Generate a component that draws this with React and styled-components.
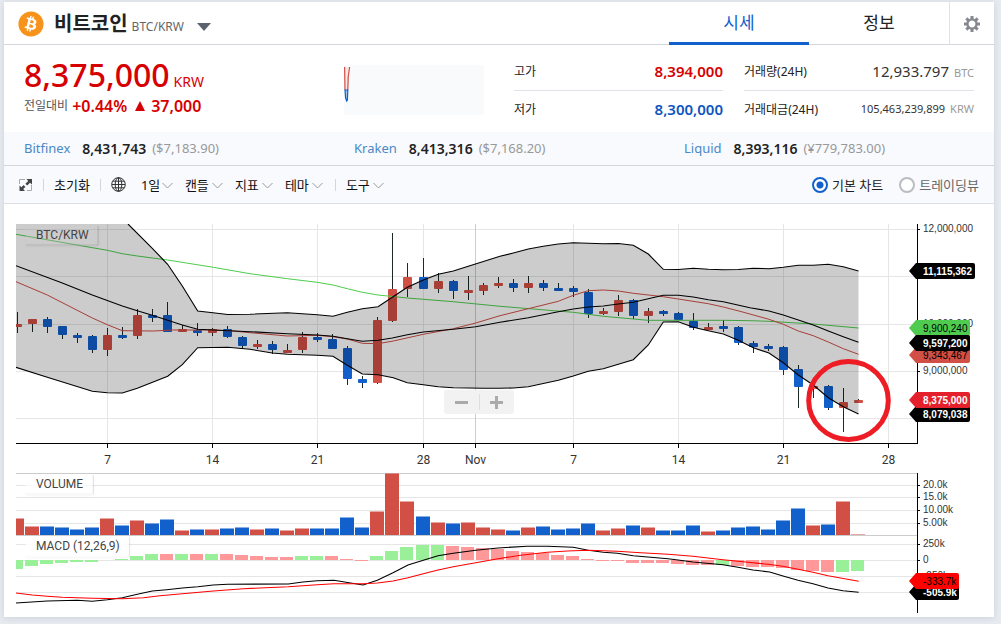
import React from "react";
import styled, { createGlobalStyle } from "styled-components";
import { FaBitcoin } from "react-icons/fa";

const BLUE = "#1260cc";
const RED = "#d14f45";
const GREEN = "#4fcc4f";

const GlobalStyle = createGlobalStyle`
  *, *::before, *::after { box-sizing: border-box; }
  body {
    margin: 0;
    background: #e7ebf0;
    color: #222;
    font-family: "Noto Sans", "Noto Sans CJK KR", sans-serif;
    font-size: 13px;
  }
  button, input, select { font: inherit; color: inherit; }
  button { border: 0; padding: 0; background: none; cursor: pointer; }
`;

/* ---------- layout ---------- */

const Card = styled.main`
  margin: 2px 7px 7px 4px;
  background: #fff;
  box-shadow: 0 1px 6px rgba(60, 80, 110, 0.16);
`;

const Header = styled.header`
  display: flex;
  align-items: stretch;
  height: 43px;
  box-shadow: inset 0 -1px #d4d6dc;
`;

const Market = styled.div`
  display: flex;
  align-items: center;
  flex: 1;
  padding-left: 14px;
`;

const CoinLogo = styled(FaBitcoin)`
  width: 26px;
  height: 26px;
  color: #f7931a;
`;

const CoinName = styled.h1`
  margin: 0 4px 0 10px;
  font-size: 20px;
  line-height: 26px;
  font-weight: 700;
`;

const Pair = styled.span`
  padding-top: 6px;
  font-size: 12px;
  line-height: 16px;
  color: #666;
`;

const CaretButton = styled.button`
  display: flex;
  margin-left: 13px;
  padding-top: 6px;
  color: #5b6270;
`;

const Tab = styled.button`
  width: 140px;
  padding-top: 2px;
  font-size: 17px;
  line-height: 24px;
  color: ${(p) => (p.$active ? BLUE : "#222")};
  border-bottom: 3px solid ${(p) => (p.$active ? BLUE : "transparent")};
`;

const Settings = styled.button`
  display: flex;
  align-items: center;
  justify-content: center;
  width: 45px;
  color: #85888f;
  border-left: 1px solid #e0e2e8;
`;

const Summary = styled.section`
  display: flex;
  height: 87px;
  padding: 0 20px;
`;

const PriceBlock = styled.div`
  flex: 1;
  padding-top: 12px;
  color: #d60000;
`;

const PriceLine = styled.div`
  display: flex;
  align-items: baseline;
  gap: 4px;
  height: 36px;
  font-size: 14px;
  line-height: 36px;
`;

const Price = styled.strong`
  font-size: 32px;
  font-weight: 500;
`;

const ChangeLine = styled.div`
  display: flex;
  align-items: center;
  gap: 4px;
  font-size: 16px;
  font-weight: 600;
  line-height: 26px;
`;

const ChangeLabel = styled.span`
  font-size: 12px;
  font-weight: 400;
  color: #555;
`;

const SparkBox = styled.div`
  width: 140px;
  height: 50px;
  margin: 20px 30px 0 0;
  background: #f8fafc;
`;

const Stats = styled.dl`
  width: ${(p) => p.$width}px;
  margin: 8px 0 0;
  & + & { margin-left: 21px; }
`;

const StatRow = styled.div`
  display: flex;
  align-items: center;
  justify-content: space-between;
  height: 37px;
  padding-bottom: 1px;
  & + & { border-top: 1px solid #e0e2e9; }
`;

const StatLabel = styled.dt`
  font-size: 12px;
`;

const StatValue = styled.dd`
  display: flex;
  align-items: baseline;
  gap: 5px;
  margin: 0;
  font-size: ${(p) => (p.$small ? 11 : 15)}px;
  font-weight: ${(p) => (p.$color ? 600 : 400)};
  color: ${(p) => p.$color || "#333"};
`;

const Unit = styled.span`
  font-size: 11px;
  color: #999;
`;

const Quotes = styled.section`
  display: grid;
  grid-template-columns: repeat(3, 1fr);
  height: 34px;
  padding-bottom: 1px;
  background: #f8fafd;
  border-bottom: 1px solid #d4d6dc;
`;

const Quote = styled.div`
  display: flex;
  align-items: center;
  padding-left: 20px;
`;

const Exchange = styled.span`
  margin-right: 12px;
  color: #4a88c8;
`;

const QuotePrice = styled.strong`
  margin-right: 6px;
  font-size: 14px;
  font-weight: 600;
`;

const QuoteForeign = styled.span`
  color: #999;
`;

const Toolbar = styled.div`
  display: flex;
  align-items: center;
  height: 38px;
  padding: 0 15px;
  background: #f8fafd;
  border-bottom: 1px solid #dcdfe4;
  color: #111;
`;

const ToolButton = styled.button`
  display: flex;
  line-height: 20px;
`;

const Divider = styled.i`
  width: 1px;
  height: 12px;
  margin: 0 10px;
  background: #d4d6da;
`;

const Menus = styled.div`
  display: flex;
  gap: 12px;
  margin: 0 2px 0 15px;
`;

const Dropdown = styled.label`
  display: flex;
  align-items: center;
  gap: 3px;
`;

const DropdownSelect = styled.select`
  width: ${(p) => p.$width}px;
  height: 20px;
  padding: 0;
  border: 0;
  appearance: none;
  background: none;
  line-height: 20px;
`;

const ChartKinds = styled.div`
  display: flex;
  gap: 16px;
  margin-left: auto;
`;

const RadioLabel = styled.label`
  display: flex;
  align-items: center;
  gap: 4px;
  color: ${(p) => (p.$muted ? "#666" : "#222")};
`;

const Radio = styled.input`
  width: 16px;
  height: 16px;
  margin: 0;
  border: 2px solid #b9bcc0;
  border-radius: 50%;
  appearance: none;
  background: #fff;
  &:checked {
    border-color: ${BLUE};
    background: radial-gradient(circle, ${BLUE} 0 3px, #fff 4px);
  }
`;

const ChartArea = styled.section`
  position: relative;
`;

const ChartSvg = styled.svg`
  display: block;
  width: 100%;
  height: auto;
  font-family: Roboto, "Liberation Sans", sans-serif;
`;

const ZoomControl = styled.div`
  position: absolute;
  left: 440px;
  top: 186px;
  display: flex;
  align-items: center;
  width: 70px;
  height: 24px;
  border-radius: 3px;
  background: rgba(241, 241, 241, 0.96);
  color: #aaa;
`;

const ZoomButton = styled.button`
  display: flex;
  align-items: center;
  justify-content: center;
  flex: 1;
  height: 16px;
  & + & { border-left: 1px solid #ddd; }
`;

/* ---------- icons ---------- */

const Gear = () => (
  <svg width="16" height="16" viewBox="-8 -8 16 16" fill="none" stroke="currentColor">
    <circle r="4.6" strokeWidth="2.4" />
    {[0, 45, 90, 135, 180, 225, 270, 315].map((a) => (
      <path key={a} d="M0-5V-8" strokeWidth="3" transform={`rotate(${a})`} />
    ))}
  </svg>
);

const Expand = () => (
  <svg width="14" height="14" viewBox="0 0 14 14" fill="none">
    <path d="M0.5 6V1.5H6M12.5 7V12.5H8" stroke="#aaa" />
    <path d="M7.5 1H13V6.5L11 4.8L8.2 7.6L6.4 5.8L9.2 3ZM6 13H0.5V7.5L2.5 9.2L4.6 7.1L6.4 8.9L4.2 11Z" fill="#444" />
  </svg>
);

const Globe = () => (
  <svg width="15" height="15" viewBox="0 0 15 15" fill="none" stroke="#333">
    <circle cx="7.5" cy="7.5" r="6.8" />
    <ellipse cx="7.5" cy="7.5" rx="3.3" ry="6.8" />
    <path d="M7.5 1V14M1 7.5H14M2 4.2H13M2 10.8H13" />
  </svg>
);

const Chevron = () => (
  <svg width="11" height="8" viewBox="0 0 11 8" fill="none" stroke="#999">
    <path d="M0.5 2L5.5 7L10.5 2" />
  </svg>
);

/* ---------- chart data ---------- */

// direction, wick top, body top, body bottom, wick bottom
const candles = `r 312 324 327 333|r 319 319 324 332|b 317 319 327 333|b 326 326 335 339|b 333 335 338 343|b 335 336 350 353|r 328 335 350 356|b 327 335 338 339|r 309 315 336 339|b 309 315 318 322|b 302 315 332 332|r 325 329 332 332|b 323 330 333 336|r 328 329 333 336|b 326 329 337 338|b 336 337 346 349|r 340 344 347 349|b 341 344 350 354|r 344 350 353 353|r 332 337 350 353|b 333 337 340 342|b 334 339 349 349|b 346 348 379 385|b 376 379 383 388|r 317 320 383 384|r 233 289 321 322|r 263 277 289 297|b 258 277 289 289|r 273 281 289 293|b 280 281 291 299|r 276 290 293 300|r 283 285 291 295|r 277 283 286 288|b 279 283 288 292|r 276 283 288 293|b 280 283 288 291|b 283 288 291 291|b 286 288 292 297|b 289 292 314 318|r 308 311 314 315|r 295 300 312 316|b 299 300 316 319|r 308 311 316 323|b 310 311 314 316|b 312 313 320 320|b 313 321 328 330|r 323 327 330 330|b 320 326 329 332|b 326 327 343 345|b 341 343 347 353|b 344 346 349 351|b 346 347 370 375|b 365 369 387 408|r 385 386 389 398|b 385 386 408 410|r 388 402 408 432|r 399 400 403 403`
  .split("|")
  .map((row) => {
    const [dir, ...n] = row.split(" ");
    return [dir, ...n.map(Number)];
  });

const volumes = "r518 r526 b526 b527 b529 b527 r518 b525 r520 b523 b519 r530 b529 r529 b528 b527 r529 b528 r530 r528 b528 b528 b517 b527 r511 r473 r501 b516 r522 b523 r522 r527 r529 b530 r527 b526 b529 b528 b523 r530 r528 b525 r527 b530 b530 b525 r531 b530 b527 b526 b529 b520 b508 r525 b524 r501 r534"
  .split(" ");

const histogram = "g569 g566 g564 g563 g562 g562 g560 g559 g556 g554 p554 g554 p554 g554 p554 p555 p556 p557 p557 g556 g556 p556 p559 p561 g556 g551 g547 g545 g545 p546 p547 p548 p549 p551 p552 p553 p555 p556 p559 p561 p561 p563 p563 p563 p564 p565 p565 g565 p566 p567 p567 p568 p570 p571 p572 g572 g571"
  .split(" ");

const upper = "128,224 152.3,248.3 167.6,264.3 182.3,286 197.7,311 213,312.7 227.7,314.5 250,314.2 287.3,312.7 317.3,314.7 333,316.3 347.3,312.3 362.3,308.7 378,306.7 392.3,297.3 407.3,287.3 423.3,280 438.3,274.3 453.3,271 468.3,266.3 500,256.3 513.3,253 528.3,249 543.3,246.3 558.3,244 573.3,242.7 588.3,243.3 603.3,243.8 618.3,243.5 633.3,245.3 648.3,254 663.3,269.3 678.3,269.5 693.3,268.2 708.3,269.3 723.3,269.8 738.3,269.5 753.3,268.3 769,268.7 783.3,267.3 798.3,265.3 813.3,265.3 828.3,264.3 843.3,266.7 858.5,271";
const lower = "16,367.3 47.3,377.3 92.3,391.3 107.3,392.7 122.3,393 137.3,388.3 167.7,376.3 182.3,364.7 197.7,347.7 227.7,347.3 250,349.3 272.3,353 287.3,354.3 317.3,355.3 333,356.3 347.3,365.3 362.3,374 378,374.7 393.3,377.7 407.3,382.7 423.3,384.7 438.3,386.7 453.3,387.7 483.3,388.3 500,388.3 513.3,388 528.3,386.7 558.3,380.3 573.3,376 588.3,371.3 603.3,368.7 618.3,364.3 633.3,359.7 648.3,345 663.3,322 678.3,321.7 693.3,327.3 708.3,330.7 723.3,334 738.3,340.3 753.3,347.7 769,353 783.3,362.7 798.3,375 813.3,385 828.3,397.7 843.3,406.7 858.5,414";
const middle = "16,265.7 62.3,283 92.3,295 122.3,306 137.3,310.7 152.3,315.3 167.7,320.3 182.3,325 197.7,329.3 250,331.7 287.3,333.7 317.3,335 333,336.3 347.3,338.7 362.3,341.3 378,340.3 392.3,338 407.3,334.7 423.3,332 453.3,329.3 475.7,326.7 500,322.3 528.3,317.7 558.3,311.7 573.3,309 588.3,307 603.3,306 618.3,304 633.3,302.3 648.3,298.7 663.3,295.3 678.3,295.3 693.3,297 708.3,299.7 723.3,301.7 750,307.7 769,311 783.3,315 798.3,320 813.3,325 828.3,331 843.3,336.7 858.5,342.3";
const shortAverage = "16,281.7 47.3,295 92.3,318 107.3,324.7 122.3,330.7 153.3,331 173.3,330 213.3,330 233,331 250,332.7 287.3,336 317.3,335.3 333,336.7 347.3,339 362.3,343.3 378,343.7 393.3,341 423.3,334.3 453.3,328.7 475.7,323 500,315.7 528.3,308.7 558.3,301.3 573.3,295.3 588.3,290.7 603.3,290 618.3,291 633.3,293.3 663.3,296.7 678.3,299 708.3,303.7 723.3,307 740,311.3 769,319.3 783.3,324.3 798.3,331 813.3,335.7 828.3,342 843.3,348.7 858.5,354.3";
const longAverage = "16,234.3 92.3,247.7 107.3,250.3 122.3,253.7 137.3,256 167.7,260 213.3,267.3 250,273.7 287.3,278.7 317.3,282.3 333,285 347.3,288.7 362.3,292.3 378,295 407.3,298 423.3,299.3 453.3,301.7 500,306.3 573.3,312.3 603.3,316.3 633.3,319 648.3,320.3 723.3,320.3 750,320.7 769,321.3 813.3,324 858.5,328";
const macd = "16,603 47.3,601 77.3,600.3 92.3,601.3 107.3,599.7 122.3,597.7 137.3,594.3 152.3,591 166.7,589.7 182.3,588 197.7,586.7 213.3,585 227.7,584.3 288.3,584 302.7,582 317.3,580.7 334,580.3 349,582.7 363,585 377.3,580.3 393,572.7 408,565 423.3,560.3 438,555.7 453.3,553.3 475.7,550.3 498,548 527.3,546.3 547.3,546.3 573.3,547.3 588.3,550.3 603.3,552.3 617.3,553.3 633.3,555.7 668,558.7 678,560 693,562 723,564.7 738,567.3 753,570 769.7,572 783,576 798,580.3 813,583.7 828,588 843,590.7 858.7,592.3";
const signal = "16,593 32.3,595 47.3,596.3 62.3,597.3 92.3,598.3 122.3,598.7 143.3,597.7 160,595.7 182.3,593.7 213.3,591 243.3,588.7 288.3,586.7 317.3,584.7 334,583.7 363,583.7 377.3,583 393,581 408,577.7 423.3,573.7 438,570 453.3,566.7 475.7,562.7 498,558.7 520.7,555.3 547.3,552.3 567.3,551 588.3,550.3 617.3,551.3 640.7,552.7 668,554.3 693,556.3 723,559.7 738,561.3 768,564.3 783,566.3 798,569.3 813,572.3 828,575.7 858.7,581.3";

const dates = [[107, "7"], [212, "14"], [317, "21"], [423, "28"], [475, "Nov"], [573, "7"], [678, "14"], [783, "21"], [888, "28"]];

// Levels fully covered by a tag carry no label.
const scales = [
  [229, "12,000,000"], [276], [324, "10,000,000"], [371, "9,000,000"], [418],
  [485, "20.0k"], [497, "15.0k"], [510, "10.00k"], [523, "5.00k"],
  [544, "250k"], [560, "0"], [576, "-250k"], [592],
];

const tags = [
  { y: 271, text: "11,115,362", fill: "#000", ink: "#fff", right: 975 },
  { y: 328, text: "9,900,240", fill: GREEN, ink: "#000", right: 970 },
  { y: 355, text: "9,343,467", fill: RED, ink: "#000", right: 970 },
  { y: 343, text: "9,597,200", fill: "#000", ink: "#fff", right: 970 },
  { y: 414, text: "8,079,038", fill: "#000", ink: "#fff", right: 970 },
  { y: 400, text: "8,375,000", fill: "#e4202c", ink: "#fff", right: 970 },
  { y: 592, text: "-505.9k", fill: "#000", ink: "#fff", right: 959 },
  { y: 581, text: "-333.7k", fill: "#f00", ink: "#000", right: 959 },
];

const panelLabels = [
  { y: 224, width: 72, text: "BTC/KRW", fill: "rgba(204,204,204,0.3)" },
  { y: 473, width: 67, text: "VOLUME", fill: "rgba(255,255,255,0.7)" },
  { y: 535, width: 103, text: "MACD (12,26,9)", fill: "rgba(255,255,255,0.9)" },
];

// The window skips one pixel after the 27th day.
const dayX = (i) => 17 + 15 * i + (i > 26 ? 1 : 0);
const tone = { r: RED, b: BLUE, g: "#99f099", p: "#ff9999" };

function Chart() {
  return (
    <ChartSvg viewBox="4 204 990 413" role="img" aria-label="BTC/KRW">
      <defs>
        <clipPath id="plot">
          <rect x="16" y="224" width="901" height="390" />
        </clipPath>
        <filter id="lift" x="-10%" y="-20%" width="120%" height="150%">
          <feDropShadow dx="0" dy="1" stdDeviation="1" floodOpacity="0.5" />
        </filter>
      </defs>

      <g fill="#e6e6e6" shapeRendering="crispEdges">
        {scales.map(([y]) => <rect key={y} x="16" y={y} width="901" height="1" />)}
        {dates.map(([x, t]) => (
          <rect key={x} x={x} y="224" width="1" height="219" fill={t === "Nov" ? "#ccc" : undefined} />
        ))}
        <rect x="16" y="473" width="901" height="1" fill="#ccc" />
        <rect x="16" y="535" width="901" height="1" fill="#ccc" />
      </g>

      <g clipPath="url(#plot)">
        <g shapeRendering="crispEdges">
          {candles.map(([dir, wt, , , wb], i) => (
            <rect key={i} x={dayX(i)} y={wt} width="1" height={wb - wt} fill="#1b2a24" />
          ))}
        </g>
        {candles.map(([dir, , bt, bb], i) => (
          <rect key={i} x={dayX(i) - 4} y={bt} width="9" height={bb - bt} rx="1" fill={tone[dir]} />
        ))}
        <g fill="none" strokeWidth="1">
          <polyline points={longAverage} stroke={GREEN} />
          <polyline points={shortAverage} stroke={RED} />
        </g>
        <polygon
          points={`16,224 ${upper} ${lower.split(" ").reverse().join(" ")}`}
          fill="#000"
          fillOpacity="0.2"
        />
        <g fill="none" stroke="#000" strokeWidth="1.1">
          <polyline points={upper} />
          <polyline points={lower} />
          <polyline points={middle} />
        </g>

        <g shapeRendering="crispEdges">
          {volumes.map((v, i) => {
            const y = Number(v.slice(1));
            return (
              <g key={i} fill={tone[v[0]]}>
                <rect x={dayX(i) - 7} y={y} width="14" height="1" opacity="0.5" />
                <rect x={dayX(i) - 7} y={y + 1} width="14" height={534 - y} />
              </g>
            );
          })}
          {histogram.map((v, i) => {
            const y = Number(v.slice(1));
            return (
              <rect
                key={i}
                x={dayX(i) - 7}
                y={Math.min(y, 560)}
                width="13"
                height={Math.abs(y - 560)}
                fill={tone[v[0]]}
              />
            );
          })}
        </g>
        <polyline points={macd} fill="none" stroke="#000" strokeWidth="1.1" />
        <polyline points={signal} fill="none" stroke="#f00" strokeWidth="1.1" />
      </g>

      {panelLabels.map((l) => (
        <g key={l.text}>
          <path
            d={`M26 ${l.y + 21}H${26 + l.width}V${l.y + 2}`}
            fill="none"
            stroke="#000"
            strokeOpacity="0.15"
            filter="url(#lift)"
          />
          <rect x="26" y={l.y + 1} width={l.width} height="21" fill={l.fill} />
          <text x="36" y={l.y + 15} fontSize="12" fill="#444">{l.text}</text>
        </g>
      ))}

      <g fill="#000" shapeRendering="crispEdges">
        <rect x="16" y="443" width="902" height="1" />
        <rect x="917" y="224" width="1" height="220" />
        <rect x="917" y="473" width="1" height="140" />
        {dates.map(([x]) => <rect key={x} x={x} y="444" width="1" height="4" />)}
        {scales.map(([y]) => <rect key={y} x="918" y={y} width="2" height="1" />)}
      </g>
      <g fontSize="12" fill="#333" textAnchor="middle">
        {dates.map(([x, t]) => <text key={x} x={x + 0.5} y="464">{t}</text>)}
      </g>
      <g fontSize="10" fontFamily="Liberation Sans, sans-serif" fill="#333">
        {scales.filter(([, t]) => t).map(([y, t]) => <text key={y} x="923" y={y + 3}>{t}</text>)}
      </g>

      {tags.map((t) => (
        <g key={t.text}>
          <path
            d={`M909 ${t.y}L916 ${t.y - 8}H${t.right - 2}Q${t.right} ${t.y - 8} ${t.right} ${t.y - 6}V${t.y + 6}Q${t.right} ${t.y + 8} ${t.right - 2} ${t.y + 8}H916Z`}
            fill={t.fill}
          />
          <text
            x="923"
            y={t.y + 4}
            fontSize="10"
            fontFamily="Liberation Sans, sans-serif"
            fontWeight={t.ink === "#fff" ? 700 : 400}
            fill={t.ink}
          >
            {t.text}
          </text>
        </g>
      ))}

      <ellipse cx="848.5" cy="400.5" rx="39.8" ry="39" fill="none" stroke="#ee1c24" strokeWidth="5" />
    </ChartSvg>
  );
}

/* ---------- page ---------- */

const quotes = [
  ["Bitfinex", "8,431,743", "($7,183.90)"],
  ["Kraken", "8,413,316", "($7,168.20)"],
  ["Liquid", "8,393,116", "(¥779,783.00)"],
];

function Menu({ text, width = 24 }) {
  return (
    <Dropdown>
      <DropdownSelect $width={width} aria-label={text}>
        <option>{text}</option>
      </DropdownSelect>
      <Chevron />
    </Dropdown>
  );
}

export default function App() {
  return (
    <>
      <GlobalStyle />
      <Card>
        <Header>
          <Market>
            <CoinLogo />
            <CoinName>비트코인</CoinName>
            <Pair>BTC/KRW</Pair>
            <CaretButton aria-label="BTC/KRW">
              <svg width="14" height="8" viewBox="0 0 14 8">
                <path d="M0 0H14L7 8Z" fill="currentColor" />
              </svg>
            </CaretButton>
          </Market>
          <Tab $active>시세</Tab>
          <Tab>정보</Tab>
          <Settings aria-label="설정"><Gear /></Settings>
        </Header>

        <Summary>
          <PriceBlock>
            <PriceLine><Price>8,375,000</Price>KRW</PriceLine>
            <ChangeLine>
              <ChangeLabel>전일대비</ChangeLabel>
              <span>+0.44%</span>
              <svg width="16" height="10" viewBox="0 0 16 10">
                <path d="M4 10H14L9 0Z" fill="currentColor" />
              </svg>
              <span>37,000</span>
            </ChangeLine>
          </PriceBlock>
          <SparkBox>
            <svg width="140" height="50" viewBox="0 0 140 50" fill="none" strokeWidth="1.2">
              <path d="M0.7 2V25H4L5.5 2" fill="#f7dedb" fillOpacity="0.6" />
              <path d="M0.6 2L1 25M3.8 25L4.2 12L5.6 2" stroke={RED} />
              <path d="M1 25L1.6 33L2.7 36L3.4 35L3.8 25Z" stroke={BLUE} fill="#9fc3ec" />
            </svg>
          </SparkBox>
          <Stats $width={209}>
            <StatRow>
              <StatLabel>고가</StatLabel>
              <StatValue $color="#d60000">8,394,000</StatValue>
            </StatRow>
            <StatRow>
              <StatLabel>저가</StatLabel>
              <StatValue $color="#0d56c0">8,300,000</StatValue>
            </StatRow>
          </Stats>
          <Stats $width={230}>
            <StatRow>
              <StatLabel>거래량(24H)</StatLabel>
              <StatValue>12,933.797 <Unit>BTC</Unit></StatValue>
            </StatRow>
            <StatRow>
              <StatLabel>거래대금(24H)</StatLabel>
              <StatValue $small>105,463,239,899 <Unit>KRW</Unit></StatValue>
            </StatRow>
          </Stats>
        </Summary>

        <Quotes>
          {quotes.map(([name, price, foreign]) => (
            <Quote key={name}>
              <Exchange>{name}</Exchange>
              <QuotePrice>{price}</QuotePrice>
              <QuoteForeign>{foreign}</QuoteForeign>
            </Quote>
          ))}
        </Quotes>

        <Toolbar>
          <ToolButton aria-label="전체 화면"><Expand /></ToolButton>
          <Divider />
          <ToolButton>초기화</ToolButton>
          <Divider />
          <ToolButton aria-label="언어"><Globe /></ToolButton>
          <Menus>
            <Menu text="1일" width={18} />
            <Menu text="캔들" />
            <Menu text="지표" />
            <Menu text="테마" />
          </Menus>
          <Divider />
          <Menu text="도구" />
          <ChartKinds>
            <RadioLabel>
              <Radio type="radio" name="chart" defaultChecked />
              기본 차트
            </RadioLabel>
            <RadioLabel $muted>
              <Radio type="radio" name="chart" />
              트레이딩뷰
            </RadioLabel>
          </ChartKinds>
        </Toolbar>

        <ChartArea>
          <Chart />
          <ZoomControl>
            <ZoomButton aria-label="축소">
              <svg width="13" height="13" viewBox="0 0 13 13"><path d="M0 5H13V8H0Z" fill="currentColor" /></svg>
            </ZoomButton>
            <ZoomButton aria-label="확대">
              <svg width="13" height="13" viewBox="0 0 13 13"><path d="M0 5H5V0H8V5H13V8H8V13H5V8H0Z" fill="currentColor" /></svg>
            </ZoomButton>
          </ZoomControl>
        </ChartArea>
      </Card>
    </>
  );
}
